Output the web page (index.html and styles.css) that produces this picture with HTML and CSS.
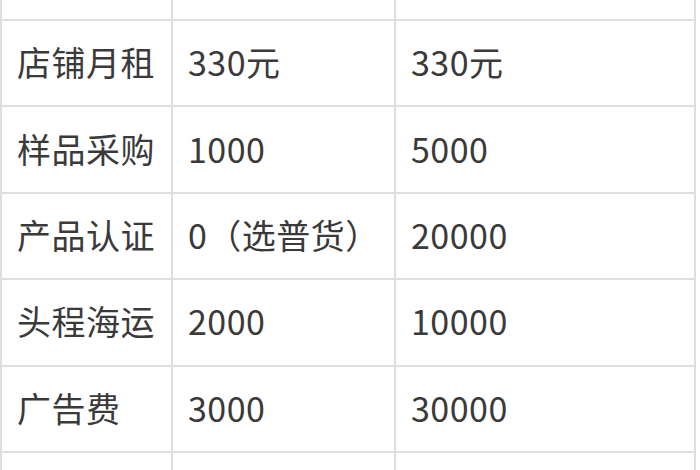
FILE: index.html
```html
<!DOCTYPE html>
<html lang="zh-CN">
<head>
<meta charset="utf-8">
<title>成本对比</title>
<link rel="stylesheet" href="styles.css">
</head>
<body>
<div class="sheet">
  <div class="cell first"></div><div class="cell"></div><div class="cell"></div>
  <div class="cell first">店铺月租</div><div class="cell">330元</div><div class="cell">330元</div>
  <div class="cell first">样品采购</div><div class="cell">1000</div><div class="cell">5000</div>
  <div class="cell first">产品认证</div><div class="cell">0（选普货）</div><div class="cell">20000</div>
  <div class="cell first">头程海运</div><div class="cell">2000</div><div class="cell">10000</div>
  <div class="cell first">广告费</div><div class="cell">3000</div><div class="cell">30000</div>
  <div class="cell first"></div><div class="cell"></div><div class="cell"></div>
</div>
</body>
</html>
```

FILE: styles.css
```css
html, body {
  margin: 0;
  padding: 0;
  background: #ffffff;
  overflow: hidden;
}
body {
  width: 700px;
  height: 470px;
}
.sheet {
  display: grid;
  grid-template-columns: 173px 223px 300px;
  grid-auto-rows: 86.4px;
  margin-top: -65.4px;
  font-family: "Noto Sans CJK SC", "Microsoft YaHei", sans-serif;
  font-size: 34px;
  color: #3a3a3a;
}
.cell {
  box-sizing: border-box;
  display: flex;
  align-items: center;
  padding-left: 15px;
  padding-bottom: 3px;
  border-right: 2px solid #dedede;
  border-bottom: 2px solid #dedede;
  white-space: nowrap;
  letter-spacing: 0.5px;
}
.first {
  border-left: 2px solid #dedede;
}
```
